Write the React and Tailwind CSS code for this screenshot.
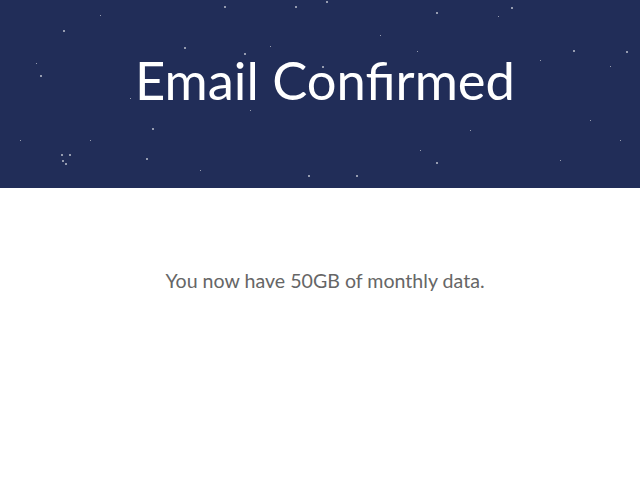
const stars = [
  [63, 30, 2], [40, 75, 2], [184, 47, 2], [436, 12, 2], [573, 50, 2], [356, 175, 2],
  [61, 154, 1.5], [69, 154, 2], [65, 163, 1.5], [62, 160, 1.5], [146, 158, 1.5], [436, 162, 1.5],
  [224, 6, 1.5], [295, 6, 1.5], [244, 53, 1.5], [322, 66, 1.5], [308, 175, 1.5], [326, 1, 1.5],
  [626, 51, 1.5], [511, 7, 1.5], [152, 128, 1.5], [270, 46, 1], [36, 63, 1], [590, 120, 1],
  [417, 51, 1], [498, 16, 1], [20, 225, 1], [100, 15, 1], [540, 60, 1], [610, 66, 1],
  [90, 140, 1], [470, 130, 1], [250, 110, 1], [380, 35, 1], [130, 98, 1], [560, 160, 1],
  [20, 140, 1], [200, 170, 1], [420, 150, 1], [620, 140, 1],
];

export default function App() {
  return (
    <div className="min-h-screen bg-white pl-[10px]" style={{ fontFamily: "Lato, 'Open Sans', sans-serif" }}>
      <header className="relative -ml-[10px] flex h-[188px] items-center justify-center overflow-hidden bg-[#212d58] pl-[10px]">
        {stars.map(([x, y, s], i) => (
          <span
            key={i}
            className="absolute rounded-full bg-white/70"
            style={{ left: x, top: y, width: s, height: s }}
          />
        ))}
        <h1 className="relative -mt-[28px] text-[52.5px] font-normal leading-none text-white">Email Confirmed</h1>
      </header>
      <p className="mt-[78px] text-center text-[19.6px] text-[#666666]">You now have 50GB of monthly data.</p>
    </div>
  );
}
